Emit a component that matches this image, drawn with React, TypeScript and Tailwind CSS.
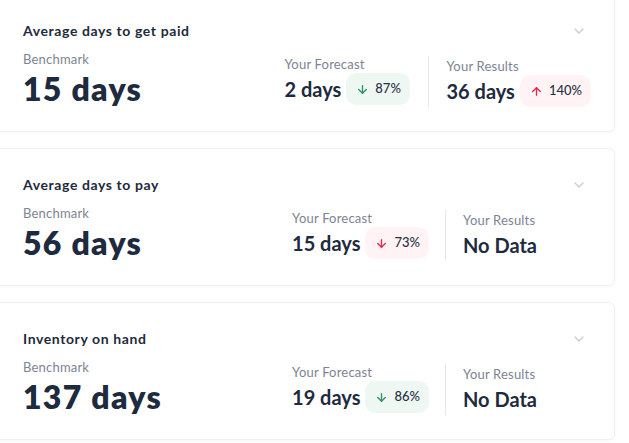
import { ArrowDown, ArrowUp, ChevronDown } from 'lucide-react';

type Trend = { dir: 'up' | 'down'; good: boolean; pct: string };

interface Metric {
  title: string;
  benchmark: string;
  forecast: string;
  forecastTrend?: Trend;
  results: string;
  resultsTrend?: Trend;
}

const metrics: Metric[] = [
  {
    title: 'Average days to get paid',
    benchmark: '15 days',
    forecast: '2 days',
    forecastTrend: { dir: 'down', good: true, pct: '87%' },
    results: '36 days',
    resultsTrend: { dir: 'up', good: false, pct: '140%' },
  },
  {
    title: 'Average days to pay',
    benchmark: '56 days',
    forecast: '15 days',
    forecastTrend: { dir: 'down', good: false, pct: '73%' },
    results: 'No Data',
  },
  {
    title: 'Inventory on hand',
    benchmark: '137 days',
    forecast: '19 days',
    forecastTrend: { dir: 'down', good: true, pct: '86%' },
    results: 'No Data',
  },
];

function TrendBadge({ trend }: { trend: Trend }) {
  const Icon = trend.dir === 'up' ? ArrowUp : ArrowDown;
  return (
    <span
      className={
        trend.good
          ? 'flex h-8 items-center gap-[6px] rounded-[10px] bg-[#eff7f3] pl-[10px] pr-[9px]'
          : 'flex h-8 items-center gap-[6px] rounded-[10px] bg-[#fff3f5] pl-[10px] pr-[9px]'
      }
    >
      <Icon
        size={13}
        strokeWidth={2.5}
        className={trend.good ? 'text-[#2b9467]' : 'text-[#e5284f]'}
      />
      <span className="text-[13px] font-medium text-[#27303f]">{trend.pct}</span>
    </span>
  );
}

function Stat({ label, value, trend }: { label: string; value: string; trend?: Trend }) {
  return (
    <div className="flex min-w-[128px] flex-col">
      <span className="text-[13px] leading-4 tracking-[0.2px] text-[#7c8493]">{label}</span>
      <div className="mt-px flex items-center gap-[5px]">
        <span className="text-[20px] font-bold leading-8 text-[#1e2a3d]">{value}</span>
        {trend && <TrendBadge trend={trend} />}
      </div>
    </div>
  );
}

function MetricCard({ metric }: { metric: Metric }) {
  return (
    <div className="-ml-[10px] rounded-md border border-[#eef0f2] bg-white pb-[24px] pl-[32px] pr-[23px] pt-[26px] shadow-[0_1px_3px_rgba(0,0,0,0.035)]">
      <div className="flex items-center justify-between">
        <h3 className="text-[14px] font-bold leading-5 tracking-[0.6px] text-[#1e2a3d]">
          {metric.title}
        </h3>
        <ChevronDown size={16} strokeWidth={2} className="mr-[4px] text-[#c9cdd3]" />
      </div>
      <div className="mt-[10px] flex items-end justify-between">
        <div className="flex flex-col">
          <span className="text-[13px] leading-4 tracking-[0.2px] text-[#7c8493]">Benchmark</span>
          <span className="mt-1 text-[32px] font-extrabold leading-9 tracking-[1.3px] text-[#1e2a3d]">
            {metric.benchmark}
          </span>
        </div>
        <div className="flex">
          <div className="pr-4">
            <Stat label="Your Forecast" value={metric.forecast} trend={metric.forecastTrend} />
          </div>
          <div className="w-px self-stretch bg-[#e6e8eb]" />
          <div className="pl-[17px] pt-[2px]">
            <Stat label="Your Results" value={metric.results} trend={metric.resultsTrend} />
          </div>
        </div>
      </div>
    </div>
  );
}

export default function App() {
  return (
    <div
      className="min-h-screen overflow-hidden bg-white"
      style={{ fontFamily: 'Lato, "Noto Sans", sans-serif' }}
    >
      <div className="-mt-[6px] flex w-[615px] flex-col gap-4">
        {metrics.map((m) => (
          <MetricCard key={m.title} metric={m} />
        ))}
      </div>
    </div>
  );
}
